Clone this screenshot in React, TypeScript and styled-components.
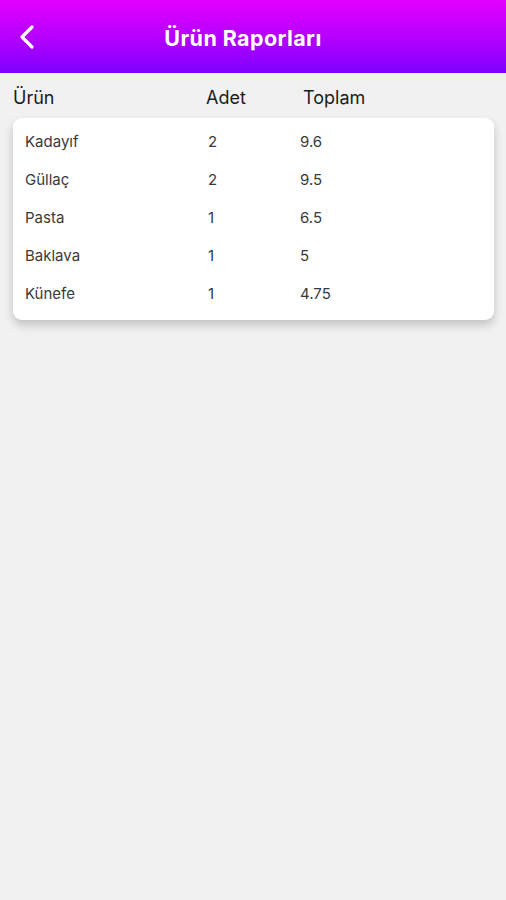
import React from "react";
import styled, { createGlobalStyle } from "styled-components";

const GlobalStyle = createGlobalStyle`
  html, body {
    margin: 0;
    padding: 0;
    background: #f1f1f1;
    font-family: Inter, "Noto Sans", "Liberation Sans", sans-serif;
  }
`;

const REPORT_LIST = [
  { name: "Kadayıf", count: 2, total: "9.6" },
  { name: "Güllaç", count: 2, total: "9.5" },
  { name: "Pasta", count: 1, total: "6.5" },
  { name: "Baklava", count: 1, total: "5" },
  { name: "Künefe", count: 1, total: "4.75" },
];

const App = () => {
  return (
    <Page>
      <GlobalStyle />

      <Header>
        <BackButton aria-label={"geri"}>
          <svg width={18} height={26} viewBox={"0 0 18 26"} fill={"none"}>
            <path
              d={"M14 3 L4 13 L14 23"}
              stroke={"#fff"}
              strokeWidth={3.2}
              strokeLinecap={"round"}
              strokeLinejoin={"round"}
            />
          </svg>
        </BackButton>
        <Title>Ürün Raporları</Title>
      </Header>

      <Body>
        {/* 테이블 헤더 */}
        <HeadRow>
          <HeadCell>Ürün</HeadCell>
          <HeadCell>Adet</HeadCell>
          <HeadCell>Toplam</HeadCell>
        </HeadRow>

        <Card>
          {REPORT_LIST.map((item) => (
            <Row key={item.name}>
              <Cell>{item.name}</Cell>
              <Cell>{item.count}</Cell>
              <Cell>{item.total}</Cell>
            </Row>
          ))}
        </Card>
      </Body>
    </Page>
  );
};

export default App;

const Page = styled.div`
  min-height: 900px;
  background: #f1f1f1;
`;

const Header = styled.header`
  position: relative;
  height: 73px;
  display: flex;
  align-items: center;
  justify-content: center;
  background: linear-gradient(180deg, #e400fe 0%, #b100fe 55%, #7c00fe 100%);
`;

const BackButton = styled.button`
  position: absolute;
  left: 18px;
  top: 24px;
  padding: 0;
  border: none;
  background: none;
  display: flex;
`;

const Title = styled.h1`
  margin: 0 0 0 -20px;
  padding-top: 3px;
  color: #fff;
  font-size: 21.5px;
  font-weight: 700;
  letter-spacing: 0.4px;
`;

const Body = styled.main`
  padding: 0 12px 0 13px;
`;

const HeadRow = styled.div`
  display: grid;
  grid-template-columns: 193px 97px 1fr;
  height: 45px;
  align-items: center;
  padding-top: 4px;
  box-sizing: border-box;
`;

const HeadCell = styled.div`
  font-size: 18px;
  color: #1c1c1c;
`;

const Card = styled.div`
  background: #fff;
  border-radius: 9px;
  box-shadow: 0 5px 10px rgba(0, 0, 0, 0.2);
  padding: 5px 12px 8px;
`;

const Row = styled.div`
  display: grid;
  grid-template-columns: 183px 92px 1fr;
  height: 37.8px;
  align-items: center;
`;

const Cell = styled.div`
  font-size: 15px;
  color: #3a3a3a;
`;
